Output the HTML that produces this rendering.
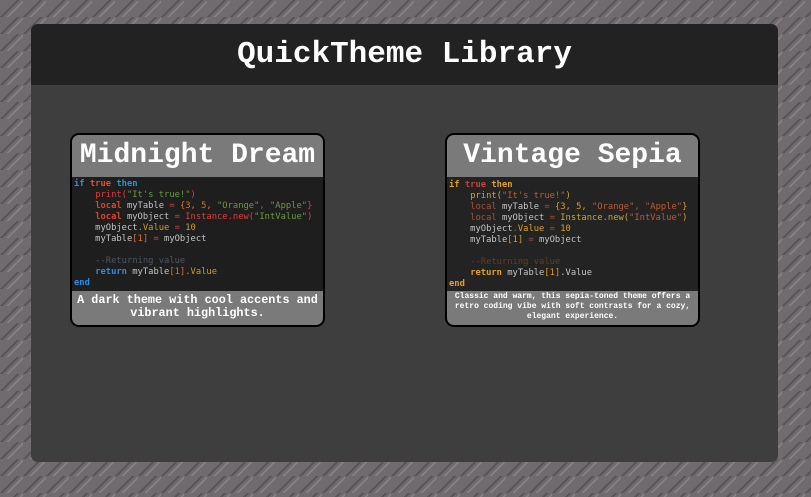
<!DOCTYPE html>
<html><head><meta charset="utf-8"><style>
*{margin:0;padding:0;box-sizing:border-box}
html,body{width:811px;height:497px;overflow:hidden}
body{position:relative;background-color:#6f6b6e;
background-image:linear-gradient(135deg,transparent 42%,#59565a 42%,#59565a 50%,transparent 50%),linear-gradient(135deg,transparent 58%,#858184 58%,#858184 64%,transparent 64%);
background-size:23px 17px;font-family:"Liberation Mono","DejaVu Sans Mono",monospace}
.panel{position:absolute;left:31px;top:24px;width:747px;height:438px;background:#3e3e3e;border-radius:7px;overflow:hidden}
.hdr{height:61px;background:#222;color:#fff;font-weight:bold;font-size:31px;text-align:center;line-height:61px}
.card{position:absolute;top:133px;width:255px;height:194px;border:2px solid #000;border-radius:9px;background:#7a7a7a;overflow:hidden}
.t{height:42px;color:#fff;font-weight:bold;font-size:28px;text-align:center;line-height:42px}
.code{background:#1e1e1e;height:114px;padding:2px 2px;font-family:"DejaVu Sans Mono",monospace;font-size:8.8px;line-height:11px;white-space:pre;color:#c4c4c4}
.code b{font-weight:bold}
.d{color:#fff;font-weight:bold;text-align:center}
</style></head><body>
<div class="panel"><div class="hdr">QuickTheme Library</div></div>
<div class="card" style="left:70px">
<div class="t">Midnight Dream</div>
<div class="code"><b style="color:#2b8de0">if</b> <b style="color:#e0502a">true</b> <b style="color:#2b8de0">then</b>
    <span style="color:#d8403c">print(</span><span style="color:#6a9a40">"It's true!"</span><span style="color:#d8403c">)</span>
    <b style="color:#e0402c">local</b> myTable <span style="color:#d8403c">=</span> <span style="color:#e07020">{3, 5,</span> <span style="color:#6a9a40">"Orange"</span><span style="color:#d8403c">,</span> <span style="color:#6a9a40">"Apple"</span><span style="color:#d8403c">}</span>
    <b style="color:#e0402c">local</b> myObject <span style="color:#d8403c">= Instance.new(</span><span style="color:#6a9a40">"IntValue"</span><span style="color:#d8403c">)</span>
    myObject<span style="color:#c8a020">.Value</span> <span style="color:#d8403c">=</span> <span style="color:#c8a020">10</span>
    myTable<span style="color:#e07020">[1]</span> <span style="color:#d8403c">=</span> myObject

    <span style="color:#4c5660">--Returning value</span>
    <b style="color:#2b8de0">return</b> myTable<span style="color:#e07020">[1]</span><span style="color:#c8a020">.Value</span>
<b style="color:#2b8de0">end</b></div>
<div class="d" style="font-size:11.8px;line-height:13px;padding-top:3px">A dark theme with cool accents and vibrant highlights.</div>
</div>
<div class="card" style="left:445px">
<div class="t">Vintage Sepia</div>
<div class="code" style="background:#232323;padding-top:3px"><b style="color:#e0a020">if</b> <b style="color:#c84040">true</b> <b style="color:#e0a020">then</b>
    <span style="color:#c8a828">print(</span><span style="color:#c05a30">"It's true!"</span><span style="color:#c8a828">)</span>
    <span style="color:#a85038">local</span> myTable <span style="color:#a85038">=</span> <span style="color:#e09a20">{3, 5,</span> <span style="color:#c05a30">"Orange"</span><span style="color:#a85038">,</span> <span style="color:#c05a30">"Apple"</span><span style="color:#e09a20">}</span>
    <span style="color:#a85038">local</span> myObject <span style="color:#a85038">=</span> <span style="color:#c8a828">Instance.new(</span><span style="color:#c05a30">"IntValue"</span><span style="color:#c8a828">)</span>
    myObject<span style="color:#a85038">.</span><span style="color:#e0a020">Value</span> <span style="color:#a85038">=</span> <span style="color:#e0a020">10</span>
    myTable<span style="color:#e09a20">[1]</span> <span style="color:#a85038">=</span> myObject

    <span style="color:#6a3c20">--Returning value</span>
    <b style="color:#e0a020">return</b> myTable<span style="color:#e09a20">[1]</span>.Value
<b style="color:#e0a020">end</b></div>
<div class="d" style="font-size:8px;line-height:10px;padding-top:1px">Classic and warm, this sepia-toned theme offers a retro coding vibe with soft contrasts for a cozy, elegant experience.</div>
</div>
</body></html>
